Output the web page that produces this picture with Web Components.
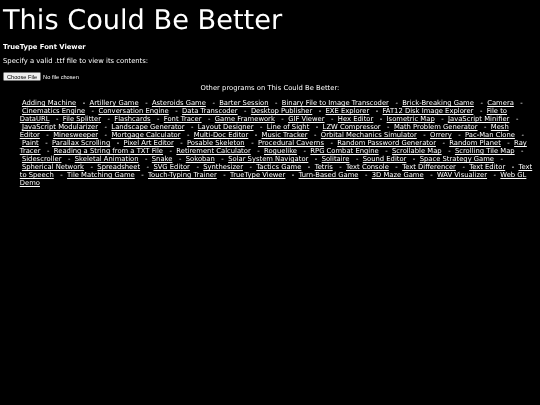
<!DOCTYPE html>
<html>
<head>
<meta charset="utf-8">
<title>TrueType Font Viewer</title>
<style>
  html, body { margin: 0; background: #000; }
</style>
</head>
<body>
<site-page>
  <site-title>This Could Be Better</site-title>
  <program-heading>TrueType Font Viewer</program-heading>
  <program-note>Specify a valid .ttf file to view its contents:</program-note>
  <font-picker></font-picker>
  <other-programs></other-programs>
</site-page>
<script>
const PROGRAMS = [
  'Adding Machine', 'Artillery Game', 'Asteroids Game', 'Barter Session', 'Binary File to Image Transcoder',
  'Brick-Breaking Game', 'Camera', 'Cinematics Engine', 'Conversation Engine', 'Data Transcoder',
  'Desktop Publisher', 'EXE Explorer', 'FAT12 Disk Image Explorer', 'File to DataURL', 'File Splitter',
  'Flashcards', 'Font Tracer', 'Game Framework', 'GIF Viewer', 'Hex Editor', 'Isometric Map',
  'JavaScript Minifier', 'JavaScript Modularizer', 'Landscape Generator', 'Layout Designer', 'Line of Sight',
  'LZW Compressor', 'Math Problem Generator', 'Mesh Editor', 'Minesweeper', 'Mortgage Calculator',
  'Multi-Doc Editor', 'Music Tracker', 'Orbital Mechanics Simulator', 'Orrery', 'Pac-Man Clone', 'Paint',
  'Parallax Scrolling', 'Pixel Art Editor', 'Posable Skeleton', 'Procedural Caverns',
  'Random Password Generator', 'Random Planet', 'Ray Tracer', 'Reading a String from a TXT File',
  'Retirement Calculator', 'Roguelike', 'RPG Combat Engine', 'Scrollable Map', 'Scrolling Tile Map',
  'Sidescroller', 'Skeletal Animation', 'Snake', 'Sokoban', 'Solar System Navigator', 'Solitaire',
  'Sound Editor', 'Space Strategy Game', 'Spherical Network', 'Spreadsheet', 'SVG Editor', 'Synthesizer',
  'Tactics Game', 'Tetris', 'Text Console', 'Text Differencer', 'Text Editor', 'Text to Speech',
  'Tile Matching Game', 'Touch-Typing Trainer', 'TrueType Viewer', 'Turn-Based Game', '3D Maze Game',
  'WAV Visualizer', 'Web GL Demo'
]

class SitePage extends HTMLElement {
  constructor() {
    super()
    this.attachShadow({ mode: 'open' })
    this.shadowRoot.innerHTML = `<style>
      :host { display: block; zoom: 0.5; padding: 6px; color: #fff; background: #000;
        font-family: "DejaVu Sans", Verdana, sans-serif; font-size: 13.6px; line-height: 16px;
        text-rendering: geometricPrecision; filter: blur(0.5px); min-height: 798px; }
      </style><slot></slot>`
  }
}
customElements.define('site-page', SitePage)

class SiteTitle extends HTMLElement {
  constructor() {
    super()
    this.attachShadow({ mode: 'open' })
    this.shadowRoot.innerHTML = `<style>
      :host { display: block; font-size: 54.4px; line-height: 70px; margin-bottom: 10px; }
      </style><slot></slot>`
  }
}
customElements.define('site-title', SiteTitle)

class ProgramHeading extends HTMLElement {
  constructor() {
    super()
    this.attachShadow({ mode: 'open' })
    this.shadowRoot.innerHTML = `<style>
      :host { display: block; font-weight: bold; margin-bottom: 12px; }
      </style><slot></slot>`
  }
}
customElements.define('program-heading', ProgramHeading)

class ProgramNote extends HTMLElement {
  constructor() {
    super()
    this.attachShadow({ mode: 'open' })
    this.shadowRoot.innerHTML = `<style>
      :host { display: block; margin-bottom: 14px; }
      </style><slot></slot>`
  }
}
customElements.define('program-note', ProgramNote)

class FontPicker extends HTMLElement {
  constructor() {
    super()
    this.attachShadow({ mode: 'open' })
    this.shadowRoot.innerHTML = `<style>
      :host { display: block; line-height: 18px; }
      input { color: #fff; margin: 0; font-size: 11.3px; display: block; }
      </style><input type="file" accept=".ttf">`
  }
}
customElements.define('font-picker', FontPicker)

class OtherPrograms extends HTMLElement {
  constructor() {
    super()
    this.attachShadow({ mode: 'open' })
    const links = PROGRAMS.map(name => `<a href="#">${name}</a>`).join('&nbsp; &nbsp;- &nbsp;')
    this.shadowRoot.innerHTML = `<style>
      :host { display: block; margin-top: 6px; }
      p { margin: 0 0 14px; text-align: center; }
      div { margin: 0 8px 0 33.5px; }
      a { color: #fff; }
      </style>
      <p>Other programs on This Could Be Better:</p>
      <div>&nbsp;${links}</div>`
  }
}
customElements.define('other-programs', OtherPrograms)
</script>
</body>
</html>
